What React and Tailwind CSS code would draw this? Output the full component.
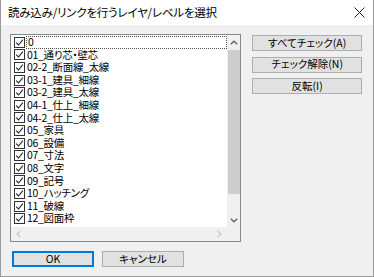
import React from "react";

const layers = [
  "0",
  "01_通り芯・壁芯",
  "02-2_断面線_太線",
  "03-1_建具_細線",
  "03-2_建具_太線",
  "04-1_仕上_細線",
  "04-2_仕上_太線",
  "05_家具",
  "06_設備",
  "07_寸法",
  "08_文字",
  "09_記号",
  "10_ハッチング",
  "11_破線",
  "12_図面枠",
];

const font = "[font-family:'Noto_Sans_CJK_JP',sans-serif] [font-feature-settings:'palt']";

const CheckBox = () => (
  <span className="w-[11px] h-[11px] shrink-0 border border-[#333333] bg-white flex items-center justify-center">
    <svg width="9" height="9" viewBox="0 0 9 9">
      <path d="M1.2 4.6 L3.5 7 L7.9 1.6" fill="none" stroke="#222" strokeWidth="1.1" />
    </svg>
  </span>
);

const Btn = ({ children, primary, className = "" }) => (
  <button
    className={`h-[16px] flex items-center justify-center text-[10.5px] leading-none text-black bg-[#e1e1e1] ${
      primary ? "border-2 border-[#0078d7]" : "border border-[#adadad]"
    } ${className}`}
  >
    {children}
  </button>
);

const App = () => {
  return (
    <div className={`w-[374px] h-[277px] flex flex-col bg-[#f0f0f0] border-x border-b border-[#9a9a9a] ${font}`}>
      <div className="h-[25px] bg-white flex items-center justify-between pl-[7px] pr-[8px] shrink-0">
        <span className="text-[11.5px] text-black tracking-[-0.2px]">読み込み/リンクを行うレイヤ/レベルを選択</span>
        <svg width="11" height="11" viewBox="0 0 11 11">
          <path d="M0.5 0.5 L10.5 10.5 M10.5 0.5 L0.5 10.5" stroke="#222" strokeWidth="1" />
        </svg>
      </div>
      <div className="flex-1 flex flex-col pl-[9px] pr-[11px] pt-[9px]">
        <div className="flex gap-[11px]">
          <div className="w-[232px] h-[208px] border border-[#828790] bg-white grid grid-cols-[1fr_13px] grid-rows-[1fr_14px]">
            <div className="flex flex-col pl-[3px] pt-[1px] overflow-hidden">
              {layers.map((name, i) => (
                <div key={name} className="h-[12.6px] flex items-center gap-[1px] shrink-0">
                  <CheckBox />
                  <span
                    className={`flex-1 h-full flex items-center text-[10.5px] leading-none text-black tracking-[-0.3px] pl-[1px] ${
                      i === 0 ? "border border-dotted border-[#555]" : ""
                    }`}
                  >
                    {name}
                  </span>
                </div>
              ))}
            </div>
            <div className="bg-[#f0f0f0] flex flex-col items-center">
              <div className="h-[15px] flex items-center justify-center">
                <svg width="8" height="5" viewBox="0 0 8 5">
                  <path d="M0.8 4.3 L4 1.2 L7.2 4.3" fill="none" stroke="#606060" strokeWidth="1.3" />
                </svg>
              </div>
              <div className="w-[12px] h-[144px] bg-[#cdcdcd]" />
              <div className="flex-1 flex items-end justify-center pb-[4px]">
                <svg width="8" height="5" viewBox="0 0 8 5">
                  <path d="M0.8 0.7 L4 3.8 L7.2 0.7" fill="none" stroke="#606060" strokeWidth="1.3" />
                </svg>
              </div>
            </div>
            <div className="bg-[#f0f0f0] flex items-center justify-between px-[5px]">
              <svg width="5" height="8" viewBox="0 0 5 8">
                <path d="M4.3 0.8 L1.2 4 L4.3 7.2" fill="none" stroke="#c4c4c4" strokeWidth="1.2" />
              </svg>
              <svg width="5" height="8" viewBox="0 0 5 8">
                <path d="M0.7 0.8 L3.8 4 L0.7 7.2" fill="none" stroke="#c4c4c4" strokeWidth="1.2" />
              </svg>
            </div>
            <div className="bg-[#f0f0f0]" />
          </div>
          <div className="flex flex-col w-[110px] gap-[5.5px] pt-[1px]">
            <Btn>すべてチェック(A)</Btn>
            <Btn>チェック解除(N)</Btn>
            <Btn>反転(I)</Btn>
          </div>
        </div>
        <div className="flex gap-[8px] pt-[9px] pl-[2px]">
          <Btn primary className="w-[82px]">OK</Btn>
          <Btn className="w-[82px]">キャンセル</Btn>
        </div>
      </div>
    </div>
  );
};

export default App;
